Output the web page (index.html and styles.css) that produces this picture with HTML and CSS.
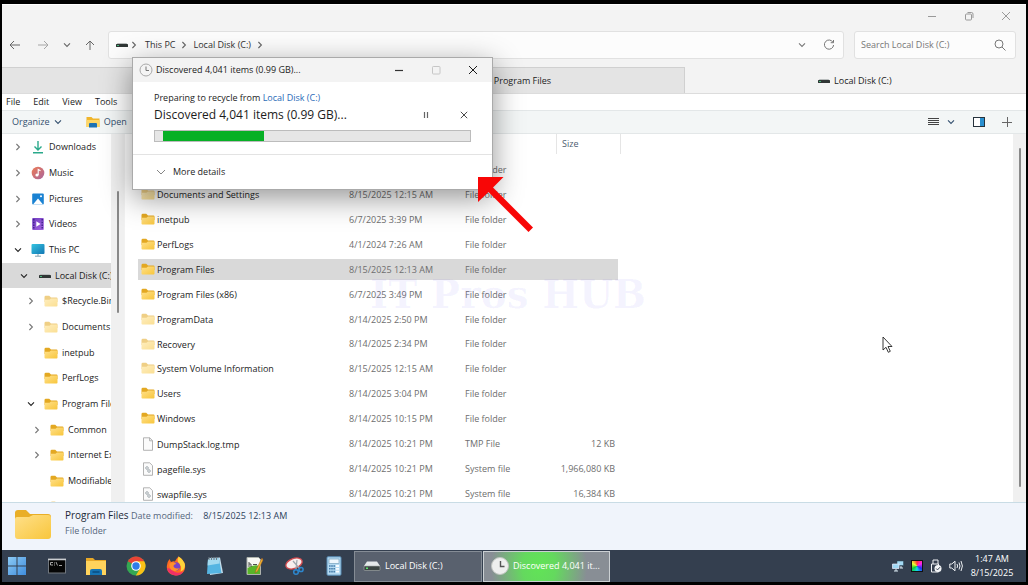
FILE: index.html
```html
<!DOCTYPE html>
<html lang="en">
<head>
<meta charset="utf-8">
<title>Local Disk (C:)</title>
<link rel="stylesheet" href="styles.css">
</head>
<body>
<svg class="defs" aria-hidden="true">
  <defs>
    <linearGradient id="gold" x1="0" y1="0" x2="1" y2="1"><stop offset="0" stop-color="#ffe08a"/><stop offset="1" stop-color="#f8c63c"/></linearGradient>
    <linearGradient id="note" x1="0" y1="0" x2="1" y2="1"><stop offset="0" stop-color="#ee7a52"/><stop offset="1" stop-color="#a8669f"/></linearGradient>
    <linearGradient id="screen" x1="0" y1="0" x2="1" y2="1"><stop offset="0" stop-color="#35c4e0"/><stop offset="1" stop-color="#1277b4"/></linearGradient>
    <linearGradient id="film" x1="0" y1="0" x2="1" y2="1"><stop offset="0" stop-color="#6f3cc0"/><stop offset="1" stop-color="#a564e0"/></linearGradient>
    <linearGradient id="tiles" x1="0" y1="0" x2="1" y2="1"><stop offset="0" stop-color="#8ccaf5"/><stop offset="1" stop-color="#3f8ddd"/></linearGradient>
  </defs>
  <symbol id="folder" viewBox="0 0 14 12"><path d="M.5 2.2Q.5.8 1.800.8h3.400l1.800 1.600h5.400q1.100 0 1.100 1.100V7H.5z" fill="#e3a822"/><path d="M.5 4.700h5l1.500-1.100h5.600q.9 0 .9.9v6q0 .9-.9.9H1.400q-.9 0-.9-.9z" fill="url(#gold)"/></symbol>
  <symbol id="drive" viewBox="0 0 12 6"><path d="M1.500 1h9l1 1.500H.5z" fill="#b9bdbd"/><rect y="2" width="12" height="3" rx=".6" fill="#303635"/><rect x="1" y="3" width="2" height="1" fill="#47b77b"/></symbol>
  <symbol id="right" viewBox="0 0 8 8"><path d="M2.400 1l3 3-3 3" fill="none" stroke="currentColor" stroke-width="1.100"/></symbol>
  <symbol id="down" viewBox="0 0 8 8"><path d="M1 2.400l3 3 3-3" fill="none" stroke="currentColor" stroke-width="1.100"/></symbol>
  <symbol id="cross" viewBox="0 0 10 10"><path d="M1 1l8 8M9 1L1 9" fill="none" stroke="currentColor" stroke-width="1"/></symbol>
  <symbol id="page" viewBox="0 0 14 14"><path d="M2.500.8h6.200l2.800 2.800v9.700h-9z" fill="#fbfbfb" stroke="#a0a0a0" stroke-width=".8"/><path d="M8.600.8v3h2.900" fill="none" stroke="#a0a0a0" stroke-width=".8"/></symbol>
  <symbol id="syspage" viewBox="0 0 14 14"><path d="M2.500.8h6.200l2.800 2.800v9.700h-9z" fill="#fbfbfb" stroke="#a0a0a0" stroke-width=".8"/><circle cx="6" cy="6" r="1.300" fill="none" stroke="#a3abb0"/><circle cx="8" cy="9" r="1.300" fill="none" stroke="#a3abb0"/></symbol>
</svg>

<div class="desktop">
  <main class="window">
    <header class="titlebar">
      <button class="caption" aria-label="Minimize"><svg width="10" height="10" viewBox="0 0 10 10"><path d="M1 5.500h8" stroke="currentColor"/></svg></button>
      <button class="caption" aria-label="Restore"><svg width="10" height="10" viewBox="0 0 10 10" fill="none" stroke="currentColor"><rect x="1.500" y="3" width="6" height="6" rx="1"/><path d="M3.500 1.500h4q1.500 0 1.500 1.500v4"/></svg></button>
      <button class="caption" aria-label="Close"><svg width="10" height="10"><use href="#cross"/></svg></button>
    </header>

    <div class="navbar">
      <div class="history">
        <button aria-label="Back"><svg width="12" height="10" viewBox="0 0 12 10"><path d="M11 5H1.500M5 1L1 5l4 4" fill="none" stroke="#666"/></svg></button>
        <button class="forward" aria-label="Forward"><svg width="12" height="10" viewBox="0 0 12 10"><path d="M1 5h9.500M7 1l4 4-4 4" fill="none" stroke="#a5a5a5"/></svg></button>
        <button aria-label="Recent"><svg width="8" height="8"><use href="#down"/></svg></button>
        <button aria-label="Up"><svg width="10" height="10" viewBox="0 0 10 10"><path d="M5 10V1.500M1 5l4-4 4 4" fill="none" stroke="#666"/></svg></button>
      </div>
      <div class="address">
        <svg width="12" height="6"><use href="#drive"/></svg>
        <svg class="first" width="8" height="8"><use href="#right"/></svg>
        <button>This PC</button>
        <svg width="8" height="8"><use href="#right"/></svg>
        <button>Local Disk (C:)</button>
        <svg width="8" height="8"><use href="#right"/></svg>
        <button class="push" aria-label="Previous locations"><svg width="8" height="8"><use href="#down"/></svg></button>
        <button class="refresh" aria-label="Refresh"><svg width="12" height="12" viewBox="0 0 12 12"><path d="M10 3.300A4.600 4.600 0 1 0 10.600 6M10.500 1v2.700H7.700" fill="none" stroke="#777"/></svg></button>
      </div>
      <div class="search">
        <input type="text" placeholder="Search Local Disk (C:)" aria-label="Search Local Disk (C:)">
        <svg width="12" height="12" viewBox="0 0 12 12"><circle cx="5" cy="5" r="4" fill="none" stroke="#777"/><path d="M8 8l3.500 3.500" stroke="#777"/></svg>
      </div>
    </div>

    <div class="tabs">
      <button class="tab"><svg width="12" height="6"><use href="#drive"/></svg>Local Disk (C:)</button>
      <button class="tab"><svg width="14" height="12"><use href="#folder"/></svg>Program Files</button>
      <button class="tab current"><svg width="12" height="6"><use href="#drive"/></svg>Local Disk (C:)</button>
    </div>

    <nav class="menubar"><button>File</button><button>Edit</button><button>View</button><button>Tools</button></nav>

    <div class="commands">
      <button>Organize <svg width="8" height="8"><use href="#down"/></svg></button>
      <button class="open-folder"><svg width="14" height="12" viewBox="0 0 14 12"><path d="M.5 1h5l1.500 1.600h6.500V11H.5z" fill="#f0b52b"/><path d="M.5 4h13v7H.5z" fill="#ffd766"/><path d="M3 11.500V8q0-1 1-1h6q1 0 1 1v3.500z" fill="#1d72b3"/></svg>Open</button>
      <button class="push" aria-label="View layout"><svg width="11" height="10" viewBox="0 0 11 10"><path d="M0 1.500h11M0 3.500h11M0 5.500h11M0 7.500h11" stroke="#444"/></svg></button>
      <button class="viewmenu" aria-label="View options"><svg width="8" height="8"><use href="#down"/></svg></button>
      <button class="preview" aria-label="Preview pane"><svg width="12" height="10" viewBox="0 0 12 10"><rect x=".5" y=".5" width="11" height="9" fill="#fff" stroke="#26323c"/><path d="M7 1h4v8H7z" fill="#2a90d0"/></svg></button>
      <button class="add" aria-label="Add"><svg width="10" height="10" viewBox="0 0 10 10"><path d="M0 5.500h10M5.500 0v10" stroke="#666"/></svg></button>
    </div>

    <div class="content">
      <aside class="sidebar">
        <ul class="tree">
          <li><svg class="twist" width="8" height="8"><use href="#right"/></svg><svg width="14" height="14" viewBox="0 0 14 14"><path d="M7 1v9M3.500 6.500L7 10l3.500-3.500M2 12.800h10" fill="none" stroke="#2aa98b" stroke-width="1.400"/></svg>Downloads</li>
          <li><svg class="twist" width="8" height="8"><use href="#right"/></svg><svg width="14" height="14" viewBox="0 0 14 14"><circle cx="7" cy="7" r="6.300" fill="url(#note)"/><circle cx="6" cy="9" r="1.600" fill="#fff"/><path d="M7.200 9V3.500l2.300 1.200" fill="none" stroke="#fff" stroke-width="1.100"/></svg>Music</li>
          <li><svg class="twist" width="8" height="8"><use href="#right"/></svg><svg width="14" height="14" viewBox="0 0 14 14"><rect x="1.200" y="1.500" width="11.600" height="11" rx="1" fill="#1a82d2"/><path d="M2 12.500l5-6 5 6z" fill="#fff"/><circle cx="10" cy="4.200" r="1" fill="#fff"/></svg>Pictures</li>
          <li><svg class="twist" width="8" height="8"><use href="#right"/></svg><svg width="14" height="14" viewBox="0 0 14 14"><rect x="1.200" y="1" width="11.600" height="12" rx="1" fill="url(#film)"/><path d="M2.800 2v10M11.200 2v10" stroke="#3e2089" stroke-width="1.400" stroke-dasharray="1.500 1.200"/><path d="M5.300 4.300L9.500 7l-4.200 2.700z" fill="#fff"/></svg>Videos</li>
          <li><svg class="twist expanded" width="8" height="8"><use href="#down"/></svg><svg width="14" height="14" viewBox="0 0 14 14"><rect x=".5" y="1" width="13" height="10" rx="1" fill="url(#screen)"/><path d="M7 11v2M4 13.200h6" stroke="#7fa0b0"/></svg>This PC</li>
          <li class="level1 selected"><svg class="twist expanded" width="8" height="8"><use href="#down"/></svg><svg width="12" height="6"><use href="#drive"/></svg>Local Disk (C:)</li>
          <li class="level2"><svg class="twist" width="8" height="8"><use href="#right"/></svg><svg class="faded" width="14" height="12"><use href="#folder"/></svg>$Recycle.Bin</li>
          <li class="level2"><svg class="twist" width="8" height="8"><use href="#right"/></svg><svg class="faded" width="14" height="12"><use href="#folder"/></svg>Documents</li>
          <li class="level2"><span class="twist"></span><svg width="14" height="12"><use href="#folder"/></svg>inetpub</li>
          <li class="level2"><span class="twist"></span><svg width="14" height="12"><use href="#folder"/></svg>PerfLogs</li>
          <li class="level2"><svg class="twist expanded" width="8" height="8"><use href="#down"/></svg><svg width="14" height="12"><use href="#folder"/></svg>Program Files</li>
          <li class="level3"><svg class="twist" width="8" height="8"><use href="#right"/></svg><svg width="14" height="12"><use href="#folder"/></svg>Common</li>
          <li class="level3"><svg class="twist" width="8" height="8"><use href="#right"/></svg><svg width="14" height="12"><use href="#folder"/></svg>Internet Explorer</li>
          <li class="level3"><span class="twist"></span><svg width="14" height="12"><use href="#folder"/></svg>Modifiable</li>
          <li class="level3"><span class="twist"></span><svg width="14" height="12"><use href="#folder"/></svg></li>
        </ul>
        <div class="gutter"><span class="thumb short"></span></div>
      </aside>
      <section class="files">
        <table>
          <colgroup><col class="c-name"><col class="c-date"><col class="c-type"><col class="c-size"></colgroup>
          <thead><tr><th></th><th></th><th></th><th class="size">Size</th></tr></thead>
          <tbody>
            <tr><td></td><td></td><td>File folder</td><td></td></tr>
            <tr><td><svg class="faded" width="14" height="12"><use href="#folder"/></svg>Documents and Settings</td><td>8/15/2025 12:15 AM</td><td>File folder</td><td></td></tr>
            <tr><td><svg width="14" height="12"><use href="#folder"/></svg>inetpub</td><td>6/7/2025 3:39 PM</td><td>File folder</td><td></td></tr>
            <tr><td><svg width="14" height="12"><use href="#folder"/></svg>PerfLogs</td><td>4/1/2024 7:26 AM</td><td>File folder</td><td></td></tr>
            <tr class="picked"><td><svg width="14" height="12"><use href="#folder"/></svg>Program Files</td><td>8/15/2025 12:13 AM</td><td>File folder</td><td></td></tr>
            <tr><td><svg width="14" height="12"><use href="#folder"/></svg>Program Files (x86)</td><td>6/7/2025 3:49 PM</td><td>File folder</td><td></td></tr>
            <tr><td><svg class="faded" width="14" height="12"><use href="#folder"/></svg>ProgramData</td><td>8/14/2025 2:50 PM</td><td>File folder</td><td></td></tr>
            <tr><td><svg class="faded" width="14" height="12"><use href="#folder"/></svg>Recovery</td><td>8/14/2025 2:34 PM</td><td>File folder</td><td></td></tr>
            <tr><td><svg class="faded" width="14" height="12"><use href="#folder"/></svg>System Volume Information</td><td>8/15/2025 12:15 AM</td><td>File folder</td><td></td></tr>
            <tr><td><svg width="14" height="12"><use href="#folder"/></svg>Users</td><td>8/14/2025 3:04 PM</td><td>File folder</td><td></td></tr>
            <tr><td><svg width="14" height="12"><use href="#folder"/></svg>Windows</td><td>8/14/2025 10:15 PM</td><td>File folder</td><td></td></tr>
            <tr><td><svg class="doc" width="14" height="14"><use href="#page"/></svg>DumpStack.log.tmp</td><td>8/14/2025 10:21 PM</td><td>TMP File</td><td>12 KB</td></tr>
            <tr><td><svg class="doc" width="14" height="14"><use href="#syspage"/></svg>pagefile.sys</td><td>8/14/2025 10:21 PM</td><td>System file</td><td>1,966,080 KB</td></tr>
            <tr><td><svg class="doc" width="14" height="14"><use href="#syspage"/></svg>swapfile.sys</td><td>8/14/2025 10:21 PM</td><td>System file</td><td>16,384 KB</td></tr>
          </tbody>
        </table>
      </section>
      <div class="gutter"><span class="thumb tall"></span></div>
    </div>

    <footer class="details">
      <svg width="38" height="32" viewBox="0 0 38 32"><path d="M1 5q0-3 3-3h8l4 4h18q3 0 3 3v5H1z" fill="#e9ae27"/><path d="M1 11q0-2 2-2h12l4-2h15q3 0 3 3v18q0 3-3 3H4q-3 0-3-3z" fill="url(#gold)"/></svg>
      <div>
        <p><span class="title">Program Files</span> Date modified: <span class="stamp">8/15/2025 12:13 AM</span></p>
        <p>File folder</p>
      </div>
    </footer>
  </main>

  <div class="taskbar">
    <nav class="launchers">
      <button aria-label="Start"><svg width="20" height="20" viewBox="0 0 20 20"><path d="M1 1h8.500v8.500H1zM10.500 1H19v8.500h-8.500zM1 10.500h8.500V19H1zM10.500 10.500H19V19h-8.500z" fill="url(#tiles)"/></svg></button>
      <button aria-label="Command Prompt"><svg width="20" height="20" viewBox="0 0 20 20"><rect x="1.500" y="3" width="17" height="14" fill="#050505" stroke="#70767d"/><path d="M1 3.500h18" stroke="#c9cdd1" stroke-width="1.500"/><path d="M6 6.500H3.500v2.500H6M7.500 6.500v1M7.500 8.500v1M9 6l1.500 3.500M12 9.500h3" fill="none" stroke="#ccc" stroke-width=".8"/></svg></button>
      <button aria-label="File Explorer"><svg width="22" height="20" viewBox="0 0 22 20"><path d="M1 2h7l2 2h11v6H1z" fill="#e7a827"/><path d="M1 5h20v14H1z" fill="#ffd35c"/><path d="M5 19v-4q0-2 2-2h8q2 0 2 2v4z" fill="#1674b4"/><path d="M7.500 16h7" stroke="#0a4c80" stroke-width="1.500"/></svg></button>
      <button aria-label="Chrome"><svg width="20" height="20" viewBox="0 0 20 20"><circle cx="10" cy="10" r="9.500" fill="#34a853"/><path d="M10 10L1.800 5.200A9.500 9.500 0 0 1 18.200 5.200z" fill="#ea4335"/><path d="M10 5.200h8.200A9.500 9.500 0 0 1 9.800 19.500L14 12.500z" fill="#fbc116"/><circle cx="10" cy="10" r="4.800" fill="#fff"/><circle cx="10" cy="10" r="3.700" fill="#2f7de9"/></svg></button>
      <button aria-label="Firefox"><svg width="20" height="20" viewBox="0 0 20 20"><path d="M12.500.5q5.500 3.500 6.500 8.500c1 6-3.500 10.500-9 10.500S.5 16 .8 10Q1 6 3.500 3l1.500 3q2-1.200 4-.6Q10 3 12.500.5z" fill="#ff6a22"/><path d="M12.500.5q5.500 3.500 6.500 8.500 0 5-4.500 6.500 2-5-2.500-9.500-1-2 .5-5.500z" fill="#ffd43a"/><path d="M1 12q1 7 9 7.400 5 0 7.500-4-8 3.500-12-2.400z" fill="#f13068"/><circle cx="10" cy="10.500" r="4.200" fill="#7745c9"/><path d="M3.500 7.500q4-2.500 7 .5-3 0-3 2.500 1.500 3 6 1.500-3 5-8 2-2.500-2-2-6.500z" fill="#ff912b"/></svg></button>
      <button aria-label="Notepad"><svg width="20" height="20" viewBox="0 0 20 20"><path d="M4 2l11-.500 3 15.500-13 2z" fill="#c5ddeb"/><path d="M3 3l11-.500L16.500 17 2 18z" fill="#55b5e2"/><path d="M3 3l11-.500.500 5-12 2z" fill="#a3daf0"/><path d="M4 1v3M6.500 1v3M9 1v3M11.500 1v3" stroke="#6d7b85" stroke-width="1.100"/></svg></button>
      <button aria-label="Notepad++"><svg width="20" height="20" viewBox="0 0 20 20"><path d="M2 1.500h11.500l2 2v15H2z" fill="#f7f8f4" stroke="#aeb3ad"/><path d="M2.500 12q6-4 12.500-2v8H2.500z" fill="#59b529"/><path d="M4 6v5M4 8h2v3M8 8.500h4" fill="none" stroke="#4f504c"/><path d="M17 2l-6 12-1 3 2.700-2L18 4z" fill="#f3b62e" stroke="#9d5621" stroke-width=".5"/></svg></button>
      <button aria-label="Snipping Tool"><svg width="20" height="20" viewBox="0 0 20 20"><ellipse cx="10" cy="7.500" rx="8.500" ry="5" transform="rotate(-20 10 7.500)" fill="#f8eeee" stroke="#d44a4e" stroke-width="1.300"/><path d="M9 5l7 8M13 4l-1 9" stroke="#9ea6ad" stroke-width="1.200"/><circle cx="12" cy="16" r="2.300" fill="none" stroke="#2d87ce" stroke-width="1.500"/><circle cx="17" cy="13.500" r="2.100" fill="none" stroke="#2d87ce" stroke-width="1.500"/></svg></button>
      <button aria-label="Calculator"><svg width="20" height="20" viewBox="0 0 20 20"><rect x="3" y=".8" width="14" height="18.400" rx="1" fill="#b4daf2" stroke="#588eb7"/><rect x="5" y="3" width="10" height="4.500" fill="#eef7fd" stroke="#78a1bd" stroke-width=".7"/><path d="M5 10h6M5 12.800h6M5 15.600h6" stroke="#477eaa" stroke-width="1.600" stroke-dasharray="1.600 .6"/><path d="M12 10h3M12 12.800h3M12 15.600h3" stroke="#f8fcff" stroke-width="1.800"/></svg></button>
    </nav>
    <button class="task"><svg width="18" height="12" viewBox="0 0 18 12"><path d="M4 1.500h10L17 6H1z" fill="#e4e8e9"/><rect x="1" y="6" width="16" height="4.500" rx="1" fill="#3c4543" stroke="#a8afae" stroke-width=".6"/><rect x="3" y="7.500" width="2" height="1.500" fill="#5be36c"/></svg>Local Disk (C:)</button>
    <button class="task busy"><svg width="18" height="18" viewBox="0 0 18 18"><circle cx="9" cy="9" r="8.500" fill="#eeefee" stroke="#bfc3bf"/><path d="M9.500 4v5.500h4" fill="none" stroke="#555" stroke-width="1.400"/></svg>Discovered 4,041 it...</button>
    <div class="tray">
      <svg width="12" height="12" viewBox="0 0 12 12"><path d="M5 1h6.500v4.500H5z" fill="#a4daf4" stroke="#294455" stroke-width=".5"/><path d="M.5 4H7v4.500H.5z" fill="#9ed7f4" stroke="#eef" stroke-width=".7"/><path d="M4 9v2M2 11h4M9 6v2M8 8h3" stroke="#dcecf5"/></svg>
      <span class="spectrum"></span>
      <svg width="12" height="14" viewBox="0 0 12 14"><path d="M3 5V1h5v4M1.500 5h7v8h-7z" fill="none" stroke="#eef1f4"/><circle cx="8" cy="9.500" r="3.500" fill="#f4f6f8"/><path d="M6.200 9.500l1.300 1.400L10 8.200" fill="none" stroke="#343f4f"/></svg>
      <svg width="14" height="12" viewBox="0 0 14 12" fill="none" stroke="#eef1f4"><path d="M.8 4h2L6 1.200v9.600L2.800 8h-2zM8 4q1.200 2 0 4M10 2.500q2 3.500 0 7M12 1q2.800 5 0 10"/></svg>
      <time class="clock">1:47 AM<br>8/15/2025</time>
    </div>
  </div>

  <div class="watermark">IT Pros HUB</div>

  <section class="dialog" role="dialog" aria-labelledby="dialog-title">
    <header>
      <svg width="14" height="14" viewBox="0 0 14 14"><circle cx="7" cy="7" r="6" fill="#f4f4f4" stroke="#a9a9a9"/><path d="M7 3.500V7.500h3" fill="none" stroke="#777"/></svg>
      <h1 id="dialog-title">Discovered 4,041 items (0.99 GB)...</h1>
      <button aria-label="Minimize"><svg width="10" height="10" viewBox="0 0 10 10"><path d="M1 5.500h8" stroke="#333" stroke-width="1.200"/></svg></button>
      <button aria-label="Maximize" disabled><svg width="10" height="10" viewBox="0 0 10 10"><rect x="1.500" y="1.500" width="7.500" height="7.500" rx=".8" fill="none" stroke="#c6c6c6"/></svg></button>
      <button aria-label="Close"><svg width="10" height="10"><use href="#cross"/></svg></button>
    </header>
    <div class="job">
      <p>Preparing to recycle from <a href="#">Local Disk (C:)</a></p>
      <div class="status"><span>Discovered 4,041 items (0.99 GB)...</span>
        <button aria-label="Pause"><svg width="8" height="8" viewBox="0 0 8 8"><path d="M2.500 1v6M5.500 1v6" stroke="#666" stroke-width="1.200"/></svg></button>
        <button aria-label="Cancel"><svg width="8" height="8" viewBox="0 0 10 10"><use href="#cross"/></svg></button>
      </div>
      <div class="progress" role="progressbar" aria-label="Discovering items"><span></span></div>
    </div>
    <button class="more"><svg width="10" height="10" viewBox="0 0 10 10"><path d="M1 3l4 4 4-4" fill="none" stroke="#777" stroke-width=".9"/></svg>More details</button>
    <svg class="arrow" width="56" height="56" viewBox="0 0 56 56"><path d="M0 0h25.500L15 10.500 55 50.500l-4.500 4.500L10.500 15 0 25z" fill="#f80606"/></svg>
  </section>

  <svg class="pointer" width="12" height="18" viewBox="0 0 12 18"><path d="M1 1v13l3-2.700 2.300 5 2-1L6 10.500h4z" fill="#fff" stroke="#222" stroke-width=".9"/></svg>
</div>
</body>
</html>
```
FILE: styles.css
```css
* { box-sizing: border-box; }
body, p, h1, ul { margin: 0; padding: 0; }
body { background: #000; color: #1c1c1c; font: 9px/12px "Open Sans", "Noto Sans", sans-serif; }
button, input { font: inherit; color: inherit; border: 0; padding: 0; background: none; }
svg { flex: none; display: block; }
.defs { position: absolute; width: 0; height: 0; }
.push { margin-left: auto; }

.desktop { position: relative; display: flex; flex-direction: column; height: 100vh; padding: 4px 2px 3px; overflow: hidden; }
.window { flex: 1; min-height: 0; display: flex; flex-direction: column; background: #f3f3f3; border-top: 1px solid #fff; }

.titlebar { display: flex; justify-content: flex-end; height: 26px; padding: 0 2px; color: #999; }
.caption { width: 37px; display: grid; place-items: center; padding-bottom: 4px; }

.navbar { display: flex; align-items: center; height: 28px; padding-right: 10px; color: #666; }
.history { display: flex; align-items: center; width: 106px; padding-left: 7px; gap: 14px; }
.history button { display: grid; place-items: center; }
.forward { margin-left: 2px; }
.address { flex: 1; display: flex; align-items: center; gap: 5px; height: 28px; padding: 0 8px 0 7px; background: #fcfcfc; border: 1px solid #e1e1e1; border-radius: 3px; }
.address button { color: #333; }
.address .first { margin: 0 2px 0 -3px; }
.address .push { margin-left: auto; color: #777; }
.address .refresh { margin-left: 12px; }
.search { display: flex; align-items: center; width: 162px; height: 28px; margin-left: 10px; padding: 0 9px 0 6px; background: #fcfcfc; border: 1px solid #e1e1e1; border-radius: 3px; }
.search input { flex: 1; min-width: 0; outline: 0; }
.search input::placeholder { color: #777; opacity: 1; }

.tabs { display: flex; height: 27px; margin-top: 8px; border-bottom: 1px solid #dcdcdc; }
.tab { flex: 1; display: flex; align-items: center; justify-content: center; gap: 4px; background: #e4e4e4; border: solid #d0d0d0; border-width: 1px 1px 0 0; }
.tab.current { background: none; border-color: transparent; }

.menubar { display: flex; align-items: center; gap: 13px; height: 16px; padding-left: 4px; background: #fff; }
.commands { display: flex; align-items: center; height: 24px; padding: 0 14px 0 10px; background: #f3f6f6; border: solid #e3e7e8; border-width: 1px 0; color: #34506f; }
.commands button { display: flex; align-items: center; gap: 4px; }
.commands .push { margin-left: auto; }
.open-folder { margin-left: 24px; }
.viewmenu { margin-left: 8px; }
.preview { margin-left: 18px; }
.add { margin-left: 17px; }

.content { flex: 1; min-height: 0; display: flex; background: #fff; overflow: hidden; }
.sidebar { display: flex; width: 123px; border-right: 1px solid #f2f2f2; }
.tree { flex: 1; min-width: 0; overflow: hidden; list-style: none; }
.tree li { display: flex; align-items: center; gap: 4px; height: 26px; padding-left: 12px; white-space: nowrap; overflow: hidden; }
.tree li:nth-child(3n) { height: 25px; }
.twist { width: 8px; margin-right: 5px; color: #777; flex: none; }
.expanded { color: #222; }
.level1 .twist { margin-right: 7px; }
.tree .level1 { padding-left: 18px; }
.tree .level2 { padding-left: 25px; }
.tree .level3 { padding-left: 31px; }
.tree .selected { background: #d9d9d9; }
.faded { opacity: .55; }
.gutter { display: flex; justify-content: center; width: 13px; background: #f0f0f0; }
.thumb { width: 2px; border-radius: 1px; background: #898989; }
.short { height: 122px; margin-top: 57px; }
.tall { margin: 14px 0 15px; }

.files { flex: 1; min-width: 0; padding-left: 13px; }
table { width: 483px; table-layout: fixed; border-collapse: separate; border-spacing: 0; }
.c-name { width: 207px; }
.c-date { width: 116px; }
.c-type { width: 95px; }
.c-size { width: 65px; }
th { height: 20px; padding: 0 5px; font-weight: 400; text-align: left; color: #4c5d70; }
.size { border: solid #e5e5e5; border-width: 0 1px; }
thead::after { content: ""; display: block; height: 3px; }
td { height: 25px; padding: 2px 4px; color: #6e6e6e; white-space: nowrap; vertical-align: middle; }
tbody tr:nth-child(8n) td { height: 24px; }
td:first-child { color: #1c1c1c; padding-left: 3px; }
td:first-child svg { display: inline-block; vertical-align: -2px; margin-right: 2px; }
td:first-child .doc { vertical-align: -3px; }
td:last-child { text-align: right; padding-right: 6px; }
.picked { background: linear-gradient(#d9d9d9, #d9d9d9) 0 2px / 480px 21px no-repeat; }

.details { display: flex; align-items: flex-start; gap: 13px; height: 48px; padding: 5px 12px; background: #f0f4fb; border-top: 1px solid #c9dce5; color: #56677b; }
.details p { line-height: 15px; }
.title { font-size: 10px; color: #1c2938; }
.stamp { margin-left: 8px; color: #2d415a; }

.taskbar { display: flex; align-items: center; height: 32px; background: #343f4f; color: #fff; }
.launchers { display: flex; justify-content: space-between; width: 352px; padding: 0 8px 0 3px; }
.launchers button { width: 24px; display: grid; place-items: center; }
.task { display: flex; align-items: center; gap: 4px; width: 128px; height: 31px; margin-right: 1px; padding: 0 8px; background: #59616e; border: 1px solid #858c95; }
.busy { width: 127px; padding: 0 7px; background: radial-gradient(ellipse 48px 60px at 55px 15px, #61e456 0, #64d95e 35%, #888e95 100%); border-color: #cbd0d3; }
.tray { display: flex; align-items: center; gap: 7px; margin-left: auto; padding-right: 12px; }
.spectrum { width: 12px; height: 12px; background: conic-gradient(#f33, #f2e, #23e, #1de, #1c3, #ef3, #f33); border: 1px solid #111; }
.clock { width: 44px; text-align: center; line-height: 14px; }

.dialog { position: absolute; left: 132px; top: 57px; width: 361px; background: #fff; border: 1px solid #aaa; box-shadow: 0 8px 28px rgba(0, 0, 0, .42); }
.dialog header { display: flex; align-items: center; height: 24px; padding: 0 14px 0 6px; background: #f3f3f3; gap: 3px; }
.dialog h1 { flex: 1; font: inherit; }
.dialog header button { margin-left: 24px; display: grid; }
.job { height: 73px; padding: 9px 21px 0; border-bottom: 1px solid #e3e3e3; }
.job p { line-height: 14px; }
.job a { color: #2b6cb8; text-decoration: none; }
.status { display: flex; align-items: center; height: 20px; font-size: 12px; }
.status span { flex: 1; }
.status button { margin-right: 3px; }
.status button + button { margin-left: 27px; }
.progress { height: 12px; margin-top: 5px; padding: 0 0 0 8px; background: #e6e6e6; border: 1px solid #bcbcbc; }
.progress span { display: block; width: 33%; height: 100%; background: #06b025; }
.more { display: flex; align-items: center; gap: 7px; height: 34px; padding-left: 23px; }
.arrow { position: absolute; left: 345px; top: 119px; }
.watermark { position: absolute; left: 370px; top: 271px; font: bold 39px/46px "DejaVu Serif", serif; color: rgba(90, 70, 240, .06); pointer-events: none; white-space: nowrap; }
.pointer { position: absolute; left: 882px; top: 336px; }
```
